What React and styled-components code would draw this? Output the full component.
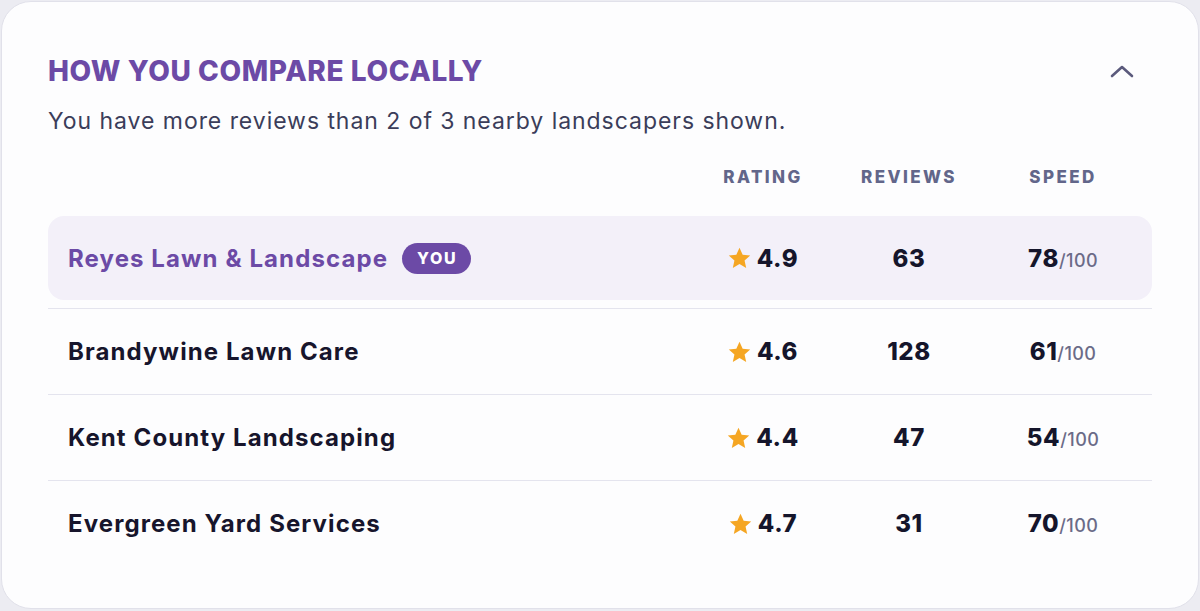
import React from 'react'
import styled, { createGlobalStyle } from 'styled-components'

const GlobalStyle = createGlobalStyle`
  * { box-sizing: border-box; }
  body {
    margin: 0;
    background: #ececf2;
    font-family: Inter, "Open Sans", sans-serif;
  }
`

const Card = styled.section`
  margin: 1px;
  height: 608px;
  background: #fdfdfe;
  border: 1px solid #e1e1ea;
  border-radius: 30px;
  padding: 50px 46px 0 46px;
`

const Head = styled.div`
  display: flex;
  align-items: center;
  justify-content: space-between;
`

const Title = styled.h2`
  margin: 0;
  font-size: 28px;
  line-height: 38px;
  font-weight: 800;
  color: #6c4aa6;
  letter-spacing: 0.6px;
`

const Toggle = styled.button`
  border: 0;
  background: none;
  padding: 0;
  margin-right: 18px;
  display: flex;
  cursor: pointer;
`

const Sub = styled.p`
  margin: 16px 0 0;
  font-size: 23px;
  line-height: 30px;
  letter-spacing: 0.95px;
  color: #3b3d5a;
`

const Grid = styled.div`
  display: grid;
  grid-template-columns: 1fr 146px 146px 162px;
  align-items: center;
  padding: 0 8px 0 20px;
`

const Labels = styled(Grid)`
  margin-top: 30px;
  height: 22px;
  margin-bottom: 28px;
`

const Label = styled.span`
  text-align: center;
  font-size: 17px;
  font-weight: 800;
  letter-spacing: 2.4px;
  color: #62668a;
`

const Row = styled(Grid)`
  height: ${p => (p.$mine ? '84px' : '86px')};
  background: ${p => (p.$mine ? '#f3f0f9' : 'transparent')};
  border-radius: ${p => (p.$mine ? '16px' : '0')};
  border-top: ${p => (p.$mine ? 'none' : '1px solid #e4e4ee')};
  margin-bottom: ${p => (p.$mine ? '8px' : '0')};
`

const Name = styled.div`
  display: flex;
  align-items: center;
  gap: 14px;
  font-size: 24px;
  font-weight: 700;
  letter-spacing: 1.1px;
  color: ${p => (p.$mine ? '#6c4aa6' : '#17152c')};
`

const Badge = styled.span`
  background: #6c4aa6;
  color: #fff;
  font-size: 16px;
  font-weight: 800;
  letter-spacing: 1.6px;
  border-radius: 16px;
  padding: 0 14px 0 15px;
  height: 31px;
  display: inline-flex;
  align-items: center;
`

const Cell = styled.div`
  display: flex;
  justify-content: center;
  align-items: baseline;
  font-size: 24px;
  font-weight: 800;
  letter-spacing: 0.6px;
  color: #15152b;
`

const Star = styled.span`
  margin-right: 6px;
  align-self: center;
  display: flex;
`

const Out = styled.span`
  font-size: 18px;
  font-weight: 500;
  letter-spacing: 0.4px;
  color: #6b6b88;
`

const rivals = [
  { name: 'Reyes Lawn & Landscape', rating: '4.9', reviews: 63, speed: 78, mine: true },
  { name: 'Brandywine Lawn Care', rating: '4.6', reviews: 128, speed: 61 },
  { name: 'Kent County Landscaping', rating: '4.4', reviews: 47, speed: 54 },
  { name: 'Evergreen Yard Services', rating: '4.7', reviews: 31, speed: 70 },
]

const StarIcon = () => (
  <svg width="23" height="22" viewBox="0 0 24 23">
    <path fill="#f5a623" d="M12 0.8l3.3 7.2 7.9 0.8-5.9 5.3 1.7 7.8L12 17.9l-7 4 1.7-7.8L0.8 8.8l7.9-0.8z" />
  </svg>
)

export default function App() {
  return (
    <>
      <GlobalStyle />
      <Card>
        <Head>
          <Title>HOW YOU COMPARE LOCALLY</Title>
          <Toggle aria-label="collapse">
            <svg width="24" height="14" viewBox="0 0 24 14" fill="none">
              <path d="M2 12L12 3l10 9" stroke="#5b5a7c" strokeWidth="2.6" strokeLinecap="round" strokeLinejoin="round" />
            </svg>
          </Toggle>
        </Head>
        <Sub>You have more reviews than 2 of 3 nearby landscapers shown.</Sub>
        <Labels>
          <span />
          <Label>RATING</Label>
          <Label>REVIEWS</Label>
          <Label>SPEED</Label>
        </Labels>
        {rivals.map(r => (
          <Row key={r.name} $mine={r.mine}>
            <Name $mine={r.mine}>
              {r.name}
              {r.mine && <Badge>YOU</Badge>}
            </Name>
            <Cell>
              <Star><StarIcon /></Star>
              {r.rating}
            </Cell>
            <Cell>{r.reviews}</Cell>
            <Cell>
              {r.speed}
              <Out>/100</Out>
            </Cell>
          </Row>
        ))}
      </Card>
    </>
  )
}
